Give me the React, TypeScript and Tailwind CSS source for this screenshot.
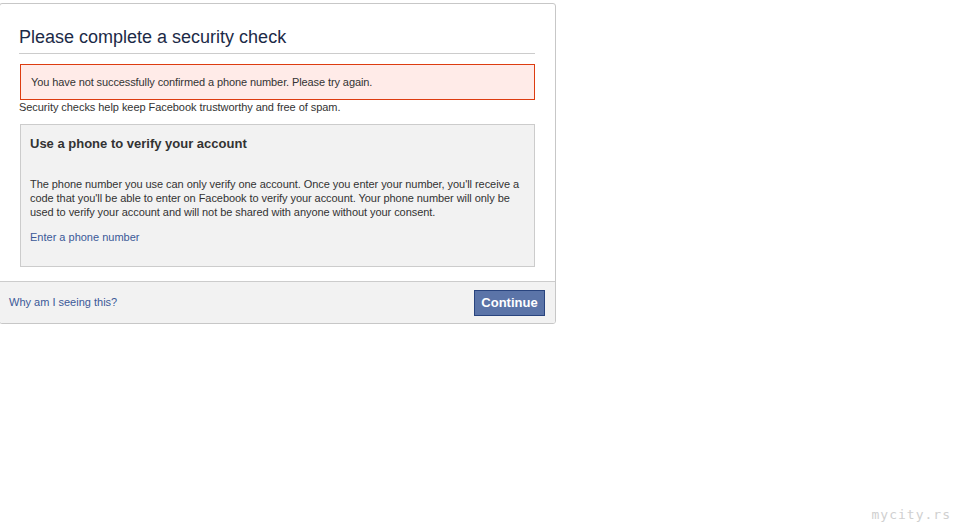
export default function App() {
  return (
    <div className="min-h-screen bg-white relative" style={{ fontFamily: '"Liberation Sans", Arial, sans-serif' }}>
      <div className="ml-[-1px] mt-[3px] w-[557px] border border-[#c7c7c7] rounded-[3px] bg-white text-[#333] overflow-hidden">
        <div className="px-[20px] pt-[22px] pb-[14px]">
          <h2 className="text-[18px] leading-[22px] text-[#1c2a47] pb-[5px] border-b border-[#cccccc] -ml-px">
            Please complete a security check
          </h2>
          <div className="mt-[10px] border border-[#dd3c10] bg-[#ffebe8] px-[10px] py-[10px] text-[11px] leading-[14px] tracking-[-0.1px]">
            You have not successfully confirmed a phone number. Please try again.
          </div>
          <p className="text-[11px] leading-[14px] -ml-px tracking-[-0.05px]">
            Security checks help keep Facebook trustworthy and free of spam.
          </p>
          <div className="mt-[10px] border border-[#cccccc] bg-[#f2f2f2] px-[9px] pt-[10px] pb-[22px]">
            <h3 className="text-[13px] leading-[17px] font-bold text-[#333]">Use a phone to verify your account</h3>
            <p className="mt-[25px] text-[11px] leading-[14px] whitespace-nowrap tracking-[-0.06px]">
              The phone number you use can only verify one account. Once you enter your number, you'll receive a
              <br />
              code that you'll be able to enter on Facebook to verify your account. Your phone number will only be
              <br />
              used to verify your account and will not be shared with anyone without your consent.
            </p>
            <a className="block mt-[11px] text-[11px] leading-[14px] text-[#3b5998]" href="#">
              Enter a phone number
            </a>
          </div>
        </div>
        <div className="border-t border-[#cccccc] bg-[#f2f2f2] flex items-center justify-between pl-[9px] pr-[10px] h-[42px]">
          <a className="text-[11px] text-[#3b5998]" href="#">
            Why am I seeing this?
          </a>
          <button className="h-[26px] w-[71px] border border-[#29447e] bg-[#5b74a8] text-white text-[13px] font-bold leading-[22px]">
            Continue
          </button>
        </div>
      </div>
      <div className="absolute right-[8px] bottom-[6px] text-[13px] text-[#d0d0d0] tracking-[1px]" style={{ fontFamily: '"DejaVu Sans Mono", monospace' }}>
        mycity.rs
      </div>
    </div>
  );
}
